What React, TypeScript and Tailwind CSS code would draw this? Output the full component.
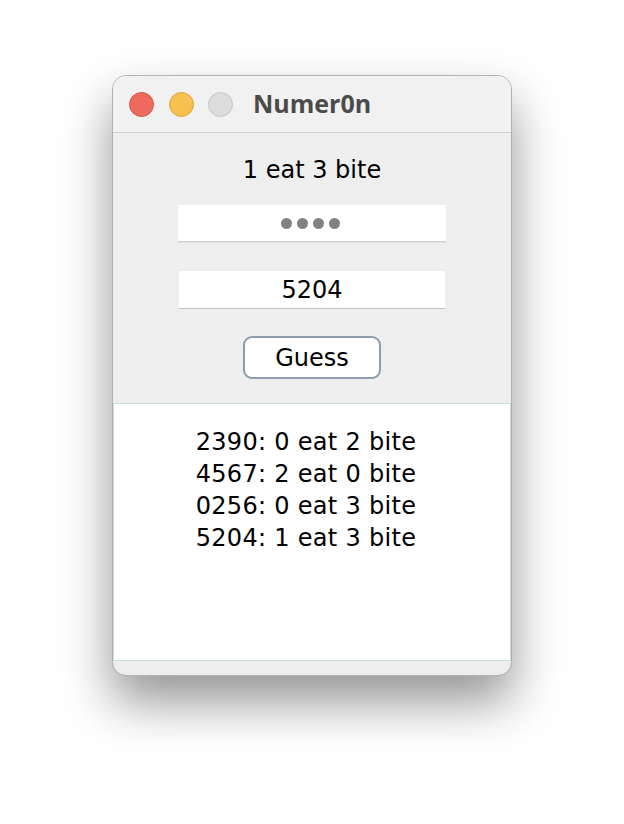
import React from "react";

export default function App() {
  const font = { fontFamily: '"Lucida Grande", "DejaVu Sans", sans-serif' };
  return (
    <div className="w-[624px] h-[824px] bg-white relative" style={font}>
      <div className="absolute left-[112px] top-[75px] w-[400px] h-[601px] rounded-[14px] bg-[#eeeeee] border border-[#b0b0b0] shadow-[0_26px_50px_rgba(0,0,0,0.42)] overflow-hidden flex flex-col">
        <div className="h-[57px] bg-[#f1f1f1] border-b border-[#cfcfcf] flex items-center pl-[16px] shrink-0">
          <div className="w-[25px] h-[25px] rounded-full bg-[#ee6a5f] border border-[#d5574c]" />
          <div className="w-[25px] h-[25px] rounded-full bg-[#f6c14e] border border-[#dca63c] ml-[15px]" />
          <div className="w-[25px] h-[25px] rounded-full bg-[#dcdcdc] border border-[#c6c6c6] ml-[14px]" />
          <div className="ml-[20px] text-[25px] font-bold text-[#4b4b4b]" style={{ fontFamily: '"Open Sans", "Liberation Sans", sans-serif' }}>Numer0n</div>
        </div>
        <div className="flex flex-col items-center">
          <div className="mt-[22px] h-[30px] text-[24px] leading-[30px] text-black">1 eat 3 bite</div>
          <div className="mt-[20px] w-[268px] h-[37px] bg-white border-b border-[#d0d0d0] shadow-[0_1px_0_#dcdcdc] flex items-center justify-center gap-[5px] pr-[4px]">
            {[0, 1, 2, 3].map((i) => (
              <span key={i} className="w-[11px] h-[11px] rounded-full bg-[#828282]" />
            ))}
          </div>
          <div className="mt-[29px] w-[266px] h-[38px] bg-white border-b border-[#c4c4c4] flex items-center justify-center text-[24px] text-black">5204</div>
          <div className="mt-[27px] w-[138px] h-[43px] rounded-[9px] border-2 border-[#8b9bb0] bg-white flex items-center justify-center text-[24px] text-black">Guess</div>
        </div>
        <div className="mt-[24px] h-[258px] bg-white border border-[#c9ddd6] flex flex-col items-center pt-[22px] pr-[12px] text-[24px] leading-[32px] tracking-[0.3px] text-black">
          <div>2390: 0 eat 2 bite</div>
          <div>4567: 2 eat 0 bite</div>
          <div>0256: 0 eat 3 bite</div>
          <div>5204: 1 eat 3 bite</div>
        </div>
      </div>
    </div>
  );
}
